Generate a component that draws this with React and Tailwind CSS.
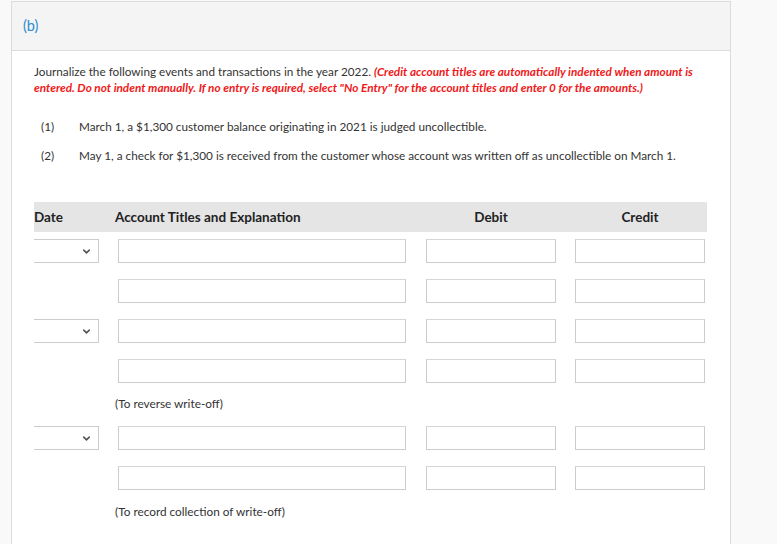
import React from 'react';
import { ChevronDown } from 'lucide-react';

const font = { fontFamily: 'Lato, "Open Sans", sans-serif' };

const Field = ({ className = '' }) => (
  <div className={`h-[24px] border border-[#ccc] border-t-[#d6d6d6] bg-white ${className}`} />
);

const DateSelect = () => (
  <div className="w-[65px] h-[24px] border border-l-0 border-[#ccc] bg-white flex items-center justify-end pr-[6px]">
    <ChevronDown size={11} strokeWidth={3.5} className="text-[#555]" />
  </div>
);

const EntryRow = ({ withDate, className = '' }) => (
  <div className={`flex items-center ${className}`}>
    {withDate ? <DateSelect /> : <div className="w-[65px]" />}
    <Field className="ml-[19px] w-[288px]" />
    <Field className="ml-[20px] w-[130px]" />
    <Field className="ml-[19px] w-[130px]" />
  </div>
);

const Caption = ({ children, className = '' }) => (
  <p className={`ml-[81px] text-[11.8px] leading-[16px] text-[#333] ${className}`}>{children}</p>
);

export default function App() {
  return (
    <div className="min-h-[544px] bg-[#f9f9f9] pt-[1px] pl-[11px]" style={font}>
      <div className="w-[720px] h-[544px] border border-[#dcdcdc] bg-white">
        {/* Header */}
        <div className="h-[49px] bg-[#f4f4f4] border-b border-[#dcdcdc] flex items-center pl-[11px]">
          <span className="text-[14.5px] text-[#2a8bd0]">(b)</span>
        </div>

        <div className="pl-[22px]">
          {/* Instructions */}
          <p className="mt-[13px] w-[680px] text-[11.75px] leading-[15.5px] text-[#333]">
            Journalize the following events and transactions in the year 2022.{' '}
            <span className="font-bold italic text-[#f01818]">
              (Credit account titles are automatically indented when amount is entered. Do not indent manually. If no
              entry is required, select "No Entry" for the account titles and enter 0 for the amounts.)
            </span>
          </p>

          {/* Events */}
          <div className="mt-[24px] text-[11.75px] leading-[16px] text-[#333]">
            <div className="flex">
              <span className="ml-[7px] w-[38px]">(1)</span>
              <span>March 1, a $1,300 customer balance originating in 2021 is judged uncollectible.</span>
            </div>
            <div className="flex mt-[13px]">
              <span className="ml-[7px] w-[38px]">(2)</span>
              <span>May 1, a check for $1,300 is received from the customer whose account was written off as uncollectible on March 1.</span>
            </div>
          </div>

          {/* Table header */}
          <div className="mt-[38px] w-[673px] h-[30px] bg-[#e5e5e5] flex items-center text-[13.5px] font-bold text-[#222]">
            <span className="w-[81px]">Date</span>
            <span className="w-[311px]">Account Titles and Explanation</span>
            <span className="w-[130px] text-center">Debit</span>
            <span className="ml-[19px] w-[130px] text-center">Credit</span>
          </div>

          <EntryRow withDate className="mt-[7px]" />
          <EntryRow className="mt-[16px]" />
          <EntryRow withDate className="mt-[16px]" />
          <EntryRow className="mt-[16px]" />
          <Caption className="mt-[13px]">(To reverse write-off)</Caption>
          <EntryRow withDate className="mt-[14px]" />
          <EntryRow className="mt-[16px]" />
          <Caption className="mt-[14px]">(To record collection of write-off)</Caption>
        </div>
      </div>
    </div>
  );
}
